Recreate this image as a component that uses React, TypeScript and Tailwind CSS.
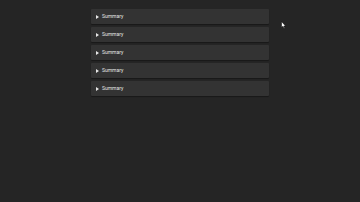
import React from "react";

function Row() {
  return (
    <div className="flex h-[15px] items-center rounded-[1px] bg-[#333333] pl-[5px] shadow-[0_1px_1px_rgba(0,0,0,0.35)]">
      <svg width="3" height="4" viewBox="0 0 3 4" className="mr-[3px]">
        <path d="M0 0 L3 2 L0 4 Z" fill="#e6e6e6" />
      </svg>
      <span className="text-[5px] leading-none text-[#e6e6e6]" style={{ fontFamily: "Roboto, 'Liberation Sans', sans-serif" }}>
        Summary
      </span>
    </div>
  );
}

export default function App() {
  return (
    <div className="relative h-[202px] w-[360px] overflow-hidden bg-[#252525]">
      <div className="ml-[91px] flex w-[178px] flex-col gap-[3px] pt-[9px]">
        <Row />
        <Row />
        <Row />
        <Row />
        <Row />
      </div>
      <svg className="absolute left-[281px] top-[21px]" width="5" height="8" viewBox="0 0 5 8">
        <path d="M0.5 0.5 L0.5 6.5 L2 5.2 L3 7.5 L3.8 7.1 L2.9 5 L4.6 5 Z" fill="#fff" stroke="#000" strokeWidth="0.5" />
      </svg>
    </div>
  );
}
